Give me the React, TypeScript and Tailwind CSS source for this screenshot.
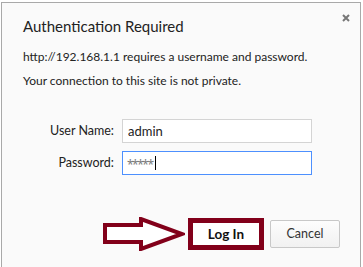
import { useState } from 'react';

const DARK_RED = '#82001a';

const Arrow = () => (
  <svg width="82" height="34" viewBox="0 0 82 34" className="block">
    <polygon
      points="2,8 38,8 38,2 79,17 38,32 38,25 2,25"
      fill="#ffffff"
      stroke={DARK_RED}
      strokeWidth="4"
      strokeLinejoin="miter"
    />
  </svg>
);

const App = () => {
  const [user, setUser] = useState('admin');
  const [pass, setPass] = useState('*****');

  return (
    <div className="w-[363px] h-[267px] bg-white pt-[2px] pl-[1px] overflow-hidden" style={{ fontFamily: 'Lato, "Noto Sans", sans-serif' }}>
      <div className="relative w-[360px] h-[265px] bg-[#fafafa] border-l border-t border-r border-[#a9a9a9] pt-[13px] pl-[21px] text-[#222]">

        {/* Close */}
        <button className="absolute right-[10px] top-[11px] w-[8px] h-[8px]" aria-label="Close">
          <svg width="8" height="8" viewBox="0 0 8 8" className="block">
            <path d="M1 1 L7 7 M7 1 L1 7" stroke="#777" strokeWidth="2" />
          </svg>
        </button>

        <h1 className="text-[15px] leading-[20px] font-normal">Authentication Required</h1>

        <p className="mt-[13px] text-[12px] leading-[16px]">http://192.168.1.1 requires a username and password.</p>
        <p className="mt-[8px] text-[12px] leading-[16px]">Your connection to this site is not private.</p>

        {/* Form */}
        <div className="mt-[30px] flex flex-col gap-[8px] text-[12.5px]">
          <div className="flex items-center">
            <label className="w-[91px] text-right">User Name:</label>
            <input
              value={user}
              onChange={(e) => setUser(e.target.value)}
              className="ml-[8px] w-[190px] h-[24px] px-[5px] bg-white border border-[#d4d4d4] outline-none text-[13px]"
            />
          </div>
          <div className="flex items-center">
            <label className="w-[91px] text-right">Password:</label>
            <div className="ml-[8px] w-[190px] h-[24px] px-[4px] bg-white border border-[#4d90fe] flex items-center">
              <span className="text-[#7a7a7a] text-[12px] leading-[12px] pt-[3px] tracking-[-1.5px]" style={{ fontFamily: '"Noto Sans", sans-serif' }}>{pass}</span>
              <span className="ml-[2px] w-[1px] h-[14px] bg-black" />
            </div>
          </div>
        </div>

        {/* Buttons */}
        <div className="mt-[42px] flex items-center">
          <div className="ml-[80px]">
            <Arrow />
          </div>
          <div className="ml-[3px] w-[76px] h-[32px] border-[5px] border-[#82001a] bg-white flex items-center justify-center">
            <button className="text-[13.5px] font-bold text-[#111]" onClick={() => setPass('')}>Log In</button>
          </div>
          <button className="ml-[6px] w-[70px] h-[28px] border border-[#c8c8c8] rounded-[2px] bg-gradient-to-b from-[#fdfdfd] to-[#f1f1f1] text-[12.5px] text-[#333]">
            Cancel
          </button>
        </div>
      </div>
    </div>
  );
};

export default App;
